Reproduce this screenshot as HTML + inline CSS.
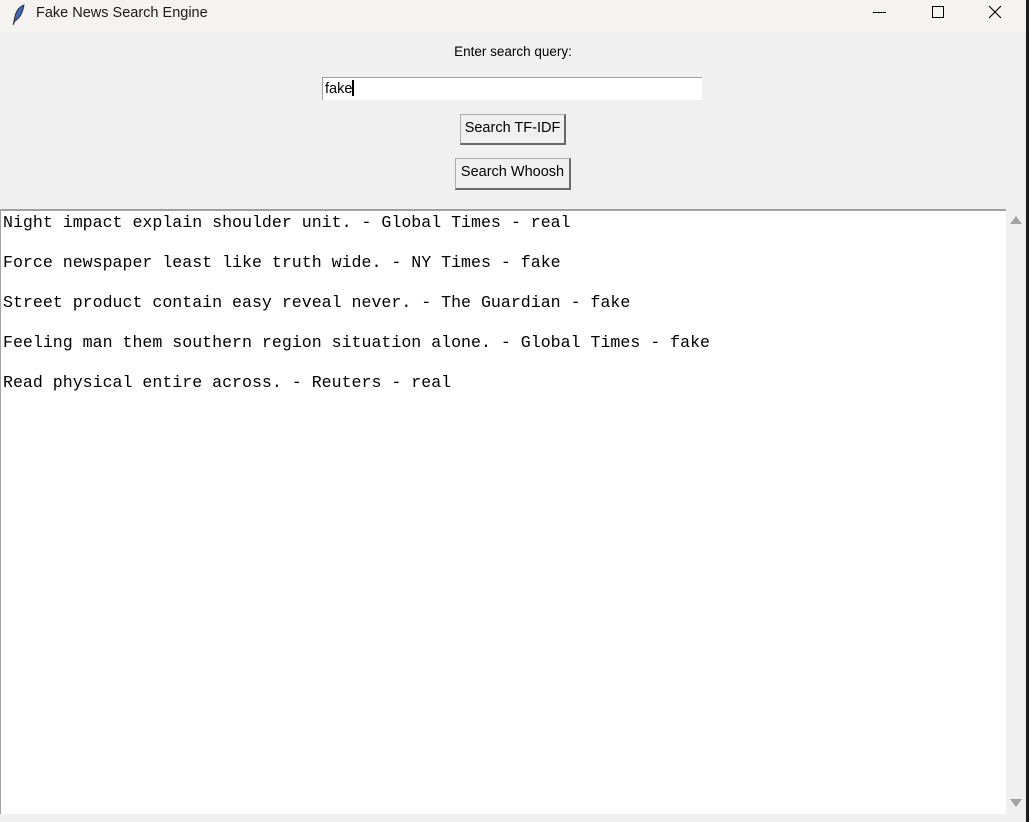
<!DOCTYPE html>
<html><head><style>
body{margin:0;width:1029px;height:822px;background:#1c1c1c;position:relative;overflow:hidden;font-family:"Liberation Sans",sans-serif}
#win{position:absolute;left:0;top:0;width:1026px;height:822px;background:#f0f0f0}
#title{position:absolute;left:0;top:0;width:1026px;height:32px;background:#f5f3ef}
#title .t{position:absolute;left:36px;top:5px;font-size:14.5px;color:#1a1a1a}
.lbl{position:absolute;left:0;width:1026px;text-align:center;top:44px;font-size:13.5px;color:#000}
#entry{position:absolute;left:322px;top:77px;width:380px;height:23px;background:#fff;border-top:1px solid #a0a0a0;border-left:1px solid #a0a0a0;box-sizing:border-box;font-size:14.5px;padding:2px 0 0 2px}
.cur{display:inline-block;width:2px;height:16px;background:#000;vertical-align:-3px}
.btn{position:absolute;background:#f0f0f0;border:1px solid #adadad;border-right:2px solid #696969;border-bottom:2px solid #696969;box-sizing:border-box;font-size:14.5px;text-align:center;line-height:27px;color:#000}
#txt{position:absolute;left:0;top:209px;width:1006px;height:605px;background:#fff;border-top:2px solid #a0a0a0;border-left:1px solid #a0a0a0;box-sizing:border-box;font-family:"Liberation Mono",monospace;font-size:16.6px;line-height:20px;padding:2px 0 0 2px;white-space:pre;color:#000}
#sb{position:absolute;left:1006px;top:209px;width:20px;height:605px;background:#f0f0f0}
</style></head><body>
<div id="win">
<div id="title">
<svg style="position:absolute;left:11px;top:4px" width="16" height="22" viewBox="0 0 16 22"><path d="M13 1 C7 3 4 9 3 17 L2 21 L4 17 C9 14 12 8 13 1Z" fill="#3b64b5" stroke="#222" stroke-width="0.8"/></svg>
<span class="t">Fake News Search Engine</span>
<svg style="position:absolute;left:872px;top:5px" width="140" height="20"><line x1="1" y1="7.5" x2="14" y2="7.5" stroke="#000"/><rect x="60.5" y="1.5" width="11" height="11" fill="none" stroke="#000"/><path d="M117 1 L129 13 M129 1 L117 13" stroke="#000" stroke-width="1.1"/></svg>
</div>
<div class="lbl">Enter search query:</div>
<div id="entry">fake<span class="cur"></span></div>
<div class="btn" style="left:460px;top:114px;width:106px;height:31px">Search TF-IDF</div>
<div class="btn" style="left:455px;top:158px;width:116px;height:32px">Search Whoosh</div>
<div id="txt">Night impact explain shoulder unit. - Global Times - real

Force newspaper least like truth wide. - NY Times - fake

Street product contain easy reveal never. - The Guardian - fake

Feeling man them southern region situation alone. - Global Times - fake

Read physical entire across. - Reuters - real</div>
<div id="sb">
<svg style="position:absolute;left:3px;top:5px" width="14" height="12"><path d="M1 10 L7 2 L13 10Z" fill="#a3a3a3"/></svg>
<svg style="position:absolute;left:3px;top:588px" width="14" height="12"><path d="M1 2 L7 10 L13 2Z" fill="#a3a3a3"/></svg>
</div>
</div>
</body></html>
